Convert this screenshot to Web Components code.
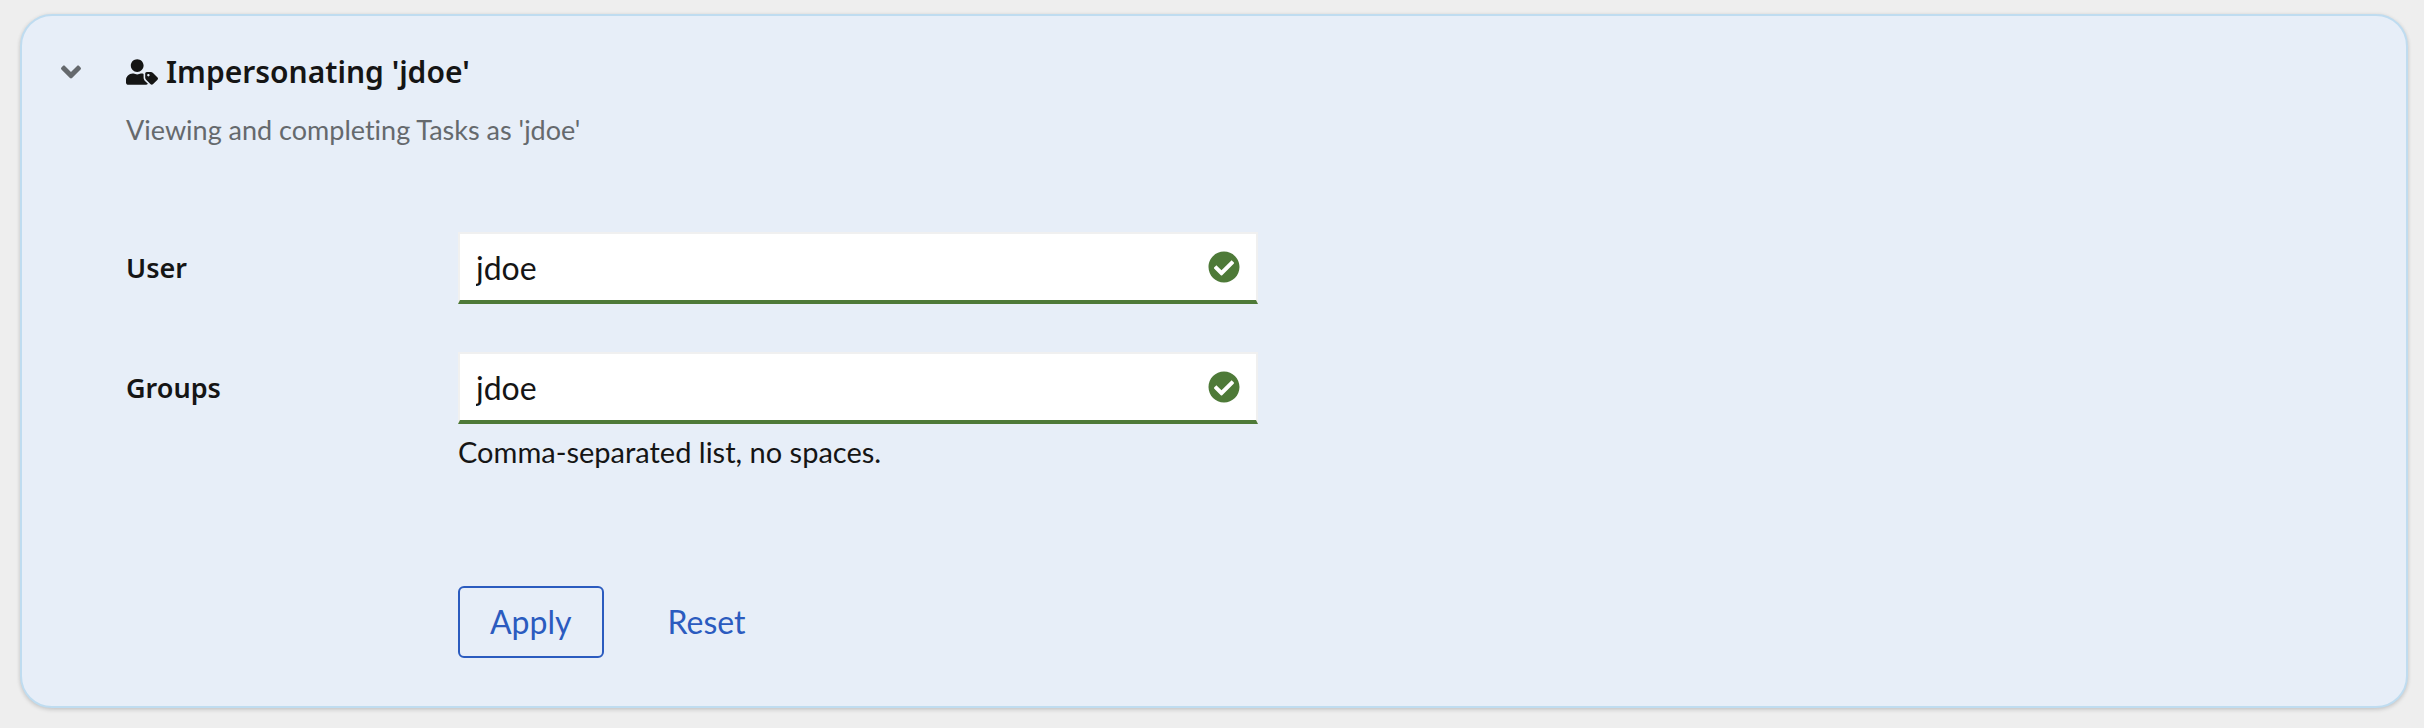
<!DOCTYPE html>
<html lang="en">
<head>
<meta charset="utf-8">
<title>Impersonation</title>
<style>
body {
  margin: 0;
  padding: 14px 16px 20px 20px;
  background: #eee;
  color: #151515;
  font-family: Lato, "Noto Sans", sans-serif;
  font-variant-ligatures: none;
  --heading-font: "Noto Sans", sans-serif;
  --muted: #65696d;
  --link: #2b5bbf;
  --success: #4e7a38;
}
</style>
</head>
<body>
<expandable-card>
  <user-tag-icon slot="icon"></user-tag-icon>
  <span slot="title">Impersonating 'jdoe'</span>
  <span slot="subtitle">Viewing and completing Tasks as 'jdoe'</span>
  <impersonation-form></impersonation-form>
</expandable-card>

<template id="card-template">
  <style>
    :host {
      display: block;
      box-sizing: border-box;
      padding: 36px 40px 48px 32px;
      border: 2px solid #bfdcf0;
      border-radius: 32px;
      background: #e7eef8;
      box-shadow: 0 2px 4px rgba(3, 3, 3, .14), 0 0 4px rgba(3, 3, 3, .06);
    }
    .layout { display: grid; grid-template-columns: 34px minmax(0, 1fr); column-gap: 38px; }
    button {
      display: flex; align-items: center; justify-content: center;
      height: 40px; padding: 0; border: 0; background: none; color: var(--muted); cursor: pointer;
    }
    button svg { display: block; width: 20px; height: 32px; }
    h2 {
      display: flex; align-items: center; gap: 8px; margin: 0;
      font: 600 30px/40px var(--heading-font);
    }
    p { margin: 18px 0 0; font-size: 27px; line-height: 40px; color: var(--muted); }
    .body { grid-column: 2; margin-top: 82px; }
    .body[hidden] { display: none; }
  </style>
  <div class="layout">
    <button type="button" aria-label="Toggle details" aria-expanded="true">
      <svg viewBox="0 0 320 512" fill="currentColor" aria-hidden="true"><path d="M143 352.3L7 216.3c-9.4-9.4-9.4-24.6 0-33.9l22.6-22.6c9.4-9.4 24.6-9.4 33.9 0l96.4 96.4 96.4-96.4c9.4-9.4 24.6-9.4 33.9 0l22.6 22.6c9.4 9.4 9.4 24.6 0 33.9l-136 136c-9.2 9.4-24.4 9.4-33.8 0z"/></svg>
    </button>
    <header>
      <h2><slot name="icon"></slot><slot name="title"></slot></h2>
      <p><slot name="subtitle"></slot></p>
    </header>
    <div class="body"><slot></slot></div>
  </div>
</template>

<template id="user-tag-template">
  <style>
    :host { display: block; }
    svg { display: block; width: 32px; height: 26px; }
  </style>
  <svg viewBox="0 0 640 512" fill="currentColor" aria-hidden="true"><path d="M630.6 364.9l-90.3-90.2c-12-12-28.3-18.7-45.3-18.7h-79.3c-17.7 0-32 14.3-32 32v79.2c0 17 6.7 33.2 18.7 45.2l90.3 90.2c12.5 12.5 32.8 12.5 45.3 0l92.5-92.5c12.6-12.5 12.6-32.7.1-45.2zm-182.8-21c-13.3 0-24-10.7-24-24s10.7-24 24-24 24 10.7 24 24c0 13.2-10.7 24-24 24zm-223.8-88c70.7 0 128-57.3 128-128C352 57.3 294.7 0 224 0S96 57.3 96 128c0 70.6 57.3 127.9 128 127.9zm127.8 111.2V294c-12.2-3.6-24.9-6.2-38.2-6.2h-16.7c-22.2 10.2-46.9 16-72.9 16s-50.6-5.8-72.9-16h-16.7C60.2 287.9 0 348.1 0 422.3v41.6c0 26.5 21.5 48 48 48h352c15.5 0 29.1-7.5 37.9-18.9l-58-58c-18.1-18.1-28.1-42.2-28.1-67.9z"/></svg>
</template>

<template id="form-template">
  <style>
    :host { display: block; }
    form { display: grid; gap: 48px; }
    .actions { display: flex; gap: 32px; margin: 66px 0 0 332px; }
  </style>
  <form>
    <form-field label="User" value="jdoe"></form-field>
    <form-field label="Groups" value="jdoe" helper="Comma-separated list, no spaces."></form-field>
    <div class="actions">
      <action-button variant="secondary">Apply</action-button>
      <action-button variant="link">Reset</action-button>
    </div>
  </form>
</template>

<template id="field-template">
  <style>
    :host { display: grid; grid-template-columns: 300px minmax(0, 800px); column-gap: 32px; align-items: start; }
    label { font: 600 27px/40px var(--heading-font); padding-top: 16px; }
    .control { position: relative; }
    input {
      display: block; box-sizing: border-box; width: 100%; height: 72px;
      padding: 0 72px 0 16px; border: 2px solid #f0f0f0; border-bottom: 4px solid var(--success);
      border-radius: 0; outline: 0; background: #fff; color: inherit;
      font-family: inherit; font-size: 32px; line-height: 48px;
    }
    svg { position: absolute; top: 19px; right: 18px; width: 32px; height: 32px; color: var(--success); }
    .helper { margin-top: 8px; font-size: 29px; line-height: 40px; }
    .helper:empty { display: none; }
  </style>
  <label for="input"></label>
  <div>
    <div class="control">
      <input id="input" type="text" aria-describedby="helper">
      <svg viewBox="0 0 512 512" fill="currentColor" aria-hidden="true"><path d="M504 256c0 136.967-111.033 248-248 248S8 392.967 8 256 119.033 8 256 8s248 111.033 248 248zM227.314 387.314l184-184c6.248-6.248 6.248-16.379 0-22.627l-22.627-22.627c-6.248-6.249-16.379-6.249-22.628 0L216 308.118l-70.059-70.059c-6.248-6.248-16.379-6.248-22.628 0l-22.627 22.627c-6.248 6.248-6.248 16.379 0 22.627l104 104c6.249 6.249 16.379 6.249 22.628.001z"/></svg>
    </div>
    <div class="helper" id="helper"></div>
  </div>
</template>

<template id="button-template">
  <style>
    :host { display: block; }
    button {
      box-sizing: border-box; height: 72px; padding: 0 30px; border: 2px solid transparent;
      border-radius: 6px; background: none; color: var(--link); cursor: pointer;
      font-family: inherit; font-size: 32px; line-height: 48px;
    }
    :host([variant="secondary"]) button { border-color: currentColor; }
  </style>
  <button type="button"><slot></slot></button>
</template>

<script>
class TemplateElement extends HTMLElement {
  constructor() {
    super();
    const template = document.getElementById(this.constructor.template);
    this.attachShadow({ mode: "open" }).append(template.content.cloneNode(true));
  }
}

class ExpandableCard extends TemplateElement {
  static template = "card-template";
  connectedCallback() {
    const toggle = this.shadowRoot.querySelector("button");
    const body = this.shadowRoot.querySelector(".body");
    toggle.onclick = () => {
      body.hidden = !body.hidden;
      toggle.setAttribute("aria-expanded", String(!body.hidden));
    };
  }
}

class UserTagIcon extends TemplateElement {
  static template = "user-tag-template";
}

class FormField extends TemplateElement {
  static template = "field-template";
  connectedCallback() {
    this.shadowRoot.querySelector("label").textContent = this.getAttribute("label");
    this.shadowRoot.querySelector(".helper").textContent = this.getAttribute("helper") || "";
    this.reset();
  }
  reset() {
    this.shadowRoot.querySelector("input").value = this.getAttribute("value") || "";
  }
}

class ActionButton extends TemplateElement {
  static template = "button-template";
}

class ImpersonationForm extends TemplateElement {
  static template = "form-template";
  connectedCallback() {
    this.shadowRoot.querySelector('[variant="link"]').addEventListener("click", () => {
      this.shadowRoot.querySelectorAll("form-field").forEach((field) => field.reset());
    });
  }
}

customElements.define("user-tag-icon", UserTagIcon);
customElements.define("form-field", FormField);
customElements.define("action-button", ActionButton);
customElements.define("impersonation-form", ImpersonationForm);
customElements.define("expandable-card", ExpandableCard);
</script>
</body>
</html>
